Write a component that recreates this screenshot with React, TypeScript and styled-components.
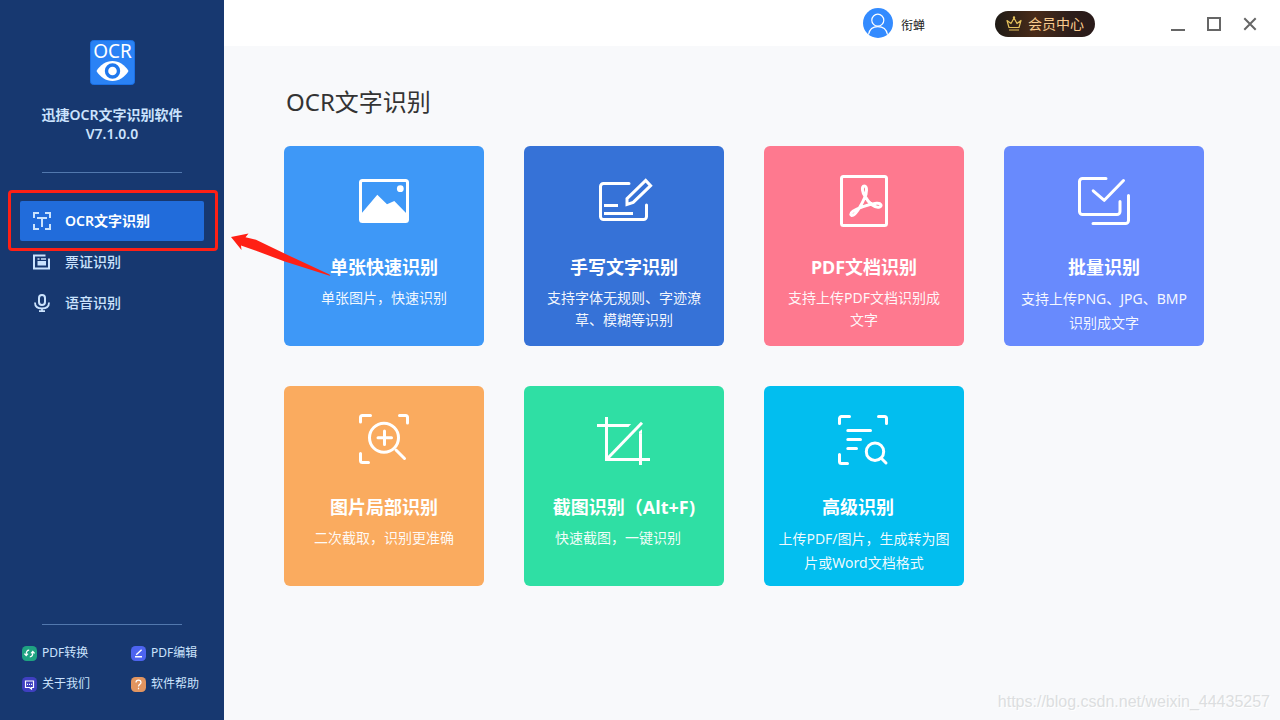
import React from 'react';
import styled, { createGlobalStyle } from 'styled-components';

const GlobalStyle = createGlobalStyle`
  *, *::before, *::after { box-sizing: border-box; }
  body {
    margin: 0;
    background: #f8f9fb;
    font-family: "Noto Sans", "Noto Sans CJK SC", sans-serif;
  }
  button { border: 0; margin: 0; padding: 0; background: none; font: inherit; color: inherit; cursor: pointer; }
  a { color: inherit; text-decoration: none; }
  svg { display: block; flex: none; overflow: visible; }
`;

const Window = styled.div`
  position: relative;
  display: flex;
  min-height: 100vh;
`;

const Sidebar = styled.aside`
  position: relative;
  z-index: 1;
  flex: none;
  display: flex;
  flex-direction: column;
  width: 224px;
  padding: 40px 0 28px;
  background: #173870;
  color: #cbe3fd;
`;

const Brand = styled.div`
  display: flex;
  flex-direction: column;
  align-items: center;
  margin-bottom: 29px;
  text-align: center;
`;

const BrandName = styled.div`
  margin-top: 20px;
  font-size: 14px;
  line-height: 19px;
  font-weight: 600;
`;

const Divider = styled.hr`
  width: 140px;
  height: 1px;
  margin: 0 auto;
  border: 0;
  background: #5278ae;
`;

const Nav = styled.nav`
  display: flex;
  flex-direction: column;
  gap: 1px;
  margin: 28px 20px auto;
`;

const NavItem = styled.a<{ $active?: boolean }>`
  position: relative;
  display: flex;
  align-items: center;
  gap: 14px;
  height: 40px;
  padding: 0 13px;
  border-radius: 2px;
  background: ${(p) => (p.$active ? '#216cdb' : 'transparent')};
  color: ${(p) => (p.$active ? '#ffffff' : '#cbe3fd')};
  font-size: 14px;
  line-height: 20px;
  font-weight: ${(p) => (p.$active ? 600 : 500)};
  svg { color: #cbe3fd; }
`;

const Highlight = styled.span`
  position: absolute;
  inset: -11px -14px -10px -12px;
  border: 3px solid #ff2015;
  border-radius: 4px;
  pointer-events: none;
`;

const Arrow = styled.svg`
  position: absolute;
  left: 211px;
  top: 32px;
  pointer-events: none;
`;

const FooterLinks = styled.div`
  display: grid;
  grid-template-columns: 109px auto;
  row-gap: 15px;
  margin-top: 20px;
  padding-left: 22px;
`;

const FooterLink = styled.a`
  display: flex;
  align-items: center;
  gap: 5px;
  font-size: 12px;
  line-height: 16px;
`;

const Content = styled.div`
  flex: 1;
  min-width: 0;
`;

const Header = styled.header`
  display: flex;
  align-items: center;
  justify-content: flex-end;
  height: 46px;
  padding-right: 23px;
  background: #ffffff;
`;

const User = styled.button`
  display: flex;
  align-items: center;
  gap: 8px;
  margin-right: 70px;
  color: #222222;
`;

const UserName = styled.span`
  padding-top: 5px;
  font-size: 12px;
  line-height: 16px;
`;

const VipButton = styled.button`
  display: flex;
  align-items: center;
  justify-content: center;
  gap: 6px;
  width: 100px;
  height: 26px;
  margin: 2px 76px 0 0;
  border-radius: 13px;
  background: linear-gradient(90deg, #1f1b16 0%, #492b19 40%, #2d1e1a 75%, #2a1b1a 100%);
  color: #f9cb8e;
  font-size: 14px;
  line-height: 20px;
`;

const WindowControls = styled.div`
  display: flex;
  gap: 22px;
  margin-top: 2px;
  color: #666666;
`;

const Main = styled.main`
  padding: 38px 40px 60px 60px;
`;

const Heading = styled.h1`
  margin: 0 0 26px 2px;
  color: #333333;
  font-size: 24px;
  line-height: 36px;
  font-weight: 400;
`;

const CardGrid = styled.div`
  display: grid;
  grid-template-columns: repeat(auto-fill, 200px);
  gap: 40px;
`;

const Card = styled.button<{ $color: string }>`
  display: flex;
  flex-direction: column;
  align-items: center;
  min-height: 200px;
  padding-top: 27px;
  border-radius: 6px;
  background: ${(p) => p.$color};
  color: #ffffff;
`;

const CardTitle = styled.span<{ $trail?: boolean }>`
  margin-top: 26px;
  padding-right: ${(p) => (p.$trail ? 12 : 0)}px;
  font-size: 18px;
  line-height: 24px;
  font-weight: 700;
  white-space: nowrap;
`;

const CardText = styled.span<{ $loose?: boolean; $trail?: boolean }>`
  margin-top: 8px;
  padding-right: ${(p) => (p.$trail ? 12 : 0)}px;
  color: rgba(255, 255, 255, 0.94);
  font-size: 14px;
  line-height: ${(p) => (p.$loose ? 24 : 22)}px;
  white-space: nowrap;
`;

const Line = styled.span`
  display: block;
`;

const Watermark = styled.div`
  position: absolute;
  right: 10px;
  bottom: 8px;
  color: #dcdee0;
  font-family: "Liberation Sans", sans-serif;
  font-size: 16px;
  line-height: 20px;
  text-shadow: 1px 1px 0 #ffffff;
  pointer-events: none;
`;

const Logo = () => (
  <svg width="45" height="45" viewBox="0 0 45 45" role="img" aria-label="OCR">
    <rect x="0.5" y="0.5" width="44" height="44" rx="3" fill="#2a82f5" stroke="#1a70e6" />
    <text x="22.5" y="18" textAnchor="middle" fill="#fff" fontSize="19" fontFamily="Noto Sans, sans-serif">OCR</text>
    <path d="M6.5 31C10 25 16 21 22.5 21S35 25 38.5 31C35 37 29 41 22.5 41S10 37 6.5 31z" fill="#fff" />
    <circle cx="22.5" cy="31" r="6" fill="#fff" stroke="#1f78ee" strokeWidth="3.4" />
  </svg>
);

const CardIcon = ({ children }: { children: React.ReactNode }) => (
  <svg width="56" height="56" viewBox="0 0 56 56" fill="none" stroke="currentColor" strokeWidth="3" strokeLinecap="round" strokeLinejoin="round" aria-hidden="true">
    {children}
  </svg>
);

const NavIcon = ({ children }: { children: React.ReactNode }) => (
  <svg width="18" height="18" viewBox="0 0 18 18" fill="none" stroke="currentColor" strokeWidth="2" aria-hidden="true">
    {children}
  </svg>
);

const FooterIcon = ({ color, children }: { color: string; children: React.ReactNode }) => (
  <svg width="15" height="15" viewBox="0 0 15 15" fill="none" stroke="#fff" strokeWidth="1.2" aria-hidden="true">
    <rect width="15" height="15" rx="4.5" fill={color} stroke="none" />
    {children}
  </svg>
);

const cards = [
  {
    color: '#3e98f7',
    title: '单张快速识别',
    lines: ['单张图片，快速识别'],
    icon: (
      <>
        <rect x="4.5" y="7.5" width="47" height="41" rx="2" />
        <path d="M5 41L21.3 21.7 31 31.3 38.3 28 51 41V48H5z" fill="currentColor" stroke="none" />
        <circle cx="44.3" cy="15.7" r="3.4" fill="currentColor" stroke="none" />
      </>
    ),
  },
  {
    color: '#3672d7',
    title: '手写文字识别',
    lines: ['支持字体无规则、字迹潦', '草、模糊等识别'],
    icon: (
      <>
        <path d="M33 10.5H7.5a3 3 0 0 0-3 3V43.5a3 3 0 0 0 3 3H47.5a3 3 0 0 0 3-3V32" />
        <path d="M8 32.5H22M8 40.5H37" strokeLinecap="butt" />
        <path d="M31 31.5V25.7L49.7 7.4 54.6 12.6 37.2 29.4z" strokeLinejoin="miter" />
      </>
    ),
  },
  {
    color: '#fe798f',
    title: 'PDF文档识别',
    lines: ['支持上传PDF文档识别成', '文字'],
    icon: (
      <>
        <rect x="5.5" y="3.5" width="45" height="49" rx="2" />
        <path
          d="M29.5 24C26.2 20 25.2 13 28.3 13S31 20 28.5 25C26 31 20.5 40.5 17.2 42.2C14.2 43.3 13.8 40.5 17 38.2C21 35.2 32 31.5 40.5 30.3C45.5 29.8 46.2 33 43.5 34C39 35.5 32.5 30 29.5 24z"
          strokeWidth="3"
        />
      </>
    ),
  },
  {
    color: '#688afd',
    title: '批量识别',
    lines: ['支持上传PNG、JPG、BMP', '识别成文字'],
    loose: true,
    icon: (
      <>
        <path d="M30 5.5H6.5a3 3 0 0 0-3 3V38.5a3 3 0 0 0 3 3H41a3 3 0 0 0 3-3V28.5" />
        <path d="M17 50.5H49.5a3 3 0 0 0 3-3V22.5" />
        <path d="M17.2 17.8L28.3 27.3 47.5 7.5" />
      </>
    ),
  },
  {
    color: '#faab5f',
    title: '图片局部识别',
    lines: ['二次截取，识别更准确'],
    icon: (
      <>
        <path d="M4.5 9V4.5a2 2 0 0 1 2-2H14.5M43.5 2.5H49.5a2 2 0 0 1 2 2V10M4.5 40.5V47.5a2 2 0 0 0 2 2H12.5" />
        <circle cx="28" cy="24.7" r="14.5" />
        <path d="M28.5 18V31.5M22 24.7H35.5M40 37L48.5 45.5" />
      </>
    ),
  },
  {
    color: '#2fdfa4',
    title: '截图识别（Alt+F)',
    lines: ['快速截图，一键识别'],
    trailText: true,
    icon: (
      <>
        <g strokeLinecap="butt" strokeLinejoin="miter">
          <path d="M10.500 4V46.500H54" />
          <path d="M1 12.500H32.500" />
          <path d="M44.500 20.500V52" />
        </g>
        <path d="M32 11h3.200l-3 3H32zM43 20.800v-2l3-2.500v4.500z" fill="currentColor" stroke="none" />
        <path d="M11 46L46 9.700" strokeLinecap="butt" />
      </>
    ),
  },
  {
    color: '#02beef',
    title: '高级识别',
    lines: ['上传PDF/图片，生成转为图', '片或Word文档格式'],
    loose: true,
    trailTitle: true,
    icon: (
      <>
        <path d="M3.5 10.5V5.5a2 2 0 0 1 2-2H13.5M42.5 3.5H48.5a2 2 0 0 1 2 2V10.5M3.5 41.5V48.5a2 2 0 0 0 2 2H11.5" />
        <path d="M11.8 17.5H34.5M11.8 26.5H24.5M11.8 35.5H20.5" />
        <circle cx="39" cy="38.7" r="8.7" />
        <path d="M45.5 45.5L50 50" />
      </>
    ),
  },
];

export default function App() {
  return (
    <>
      <GlobalStyle />
      <Window>
        <Sidebar>
          <Brand>
            <Logo />
            <BrandName>
              <Line>迅捷OCR文字识别软件</Line>
              <Line>V7.1.0.0</Line>
            </BrandName>
          </Brand>
          <Divider />
          <Nav>
            <NavItem href="#ocr" $active aria-current="page">
              <NavIcon>
                <path d="M1 6V1H6M12 1H17V6M17 12V17H12M6 17H1V12" />
                <path d="M4 6H14M9 6V15" />
              </NavIcon>
              OCR文字识别
              <Highlight />
              <Arrow width="100" height="44" viewBox="0 0 100 44" aria-hidden="true">
                <path d="M0 4L17.5 0.5 14.5 4.2 25 6.8 53 20.3 98.5 41.6 99.5 43 53 28.2 27 18.5 10 12.500 10.500 17z" fill="#ff2015" />
              </Arrow>
            </NavItem>
            <NavItem href="#tickets">
              <NavIcon>
                <path d="M12.5 2.5H1V15.5H16V5.5" />
                <path d="M4.5 6H6.5M8 6H13" strokeWidth="1.5" />
                <path d="M4.5 8h8.5v4.5h-8.5z" fill="currentColor" stroke="none" />
              </NavIcon>
              票证识别
            </NavItem>
            <NavItem href="#voice">
              <NavIcon>
                <rect x="6" y="1" width="6" height="10" rx="3" />
                <path d="M2 8.5C2 12.5 5 14.5 9 14.5S16 12.5 16 8.500M9 14.5V17M6 17.2H12" strokeWidth="1.8" />
              </NavIcon>
              语音识别
            </NavItem>
          </Nav>
          <Divider />
          <FooterLinks>
            <FooterLink href="#convert">
              <FooterIcon color="#1fa382">
                <path d="M7.2 4.2C5 4.2 4.2 5.5 4.2 8.500M2.4 7.6L4.2 9.6 6 7.6M7.8 10.8C10 10.8 10.8 9.5 10.8 6.500M9 7.4L10.8 5.4 12.6 7.4" />
              </FooterIcon>
              PDF转换
            </FooterLink>
            <FooterLink href="#edit">
              <FooterIcon color="#4d64f0">
                <path d="M5.2 8.8L10.6 3.8M4 10.7H11" strokeWidth="1.4" />
              </FooterIcon>
              PDF编辑
            </FooterLink>
            <FooterLink href="#about">
              <FooterIcon color="#3f3fc0">
                <path d="M3.5 4H11.5V10.5H9.5V12L7.5 10.5H3.5z" />
                <path d="M5 7.3H6M7 7.3H8M9 7.3H10" />
              </FooterIcon>
              关于我们
            </FooterLink>
            <FooterLink href="#help">
              <FooterIcon color="#e29560">
                <path d="M5 5.5C5 2.3 10 2.3 10 5.5C10 7.3 7.5 7.3 7.5 9.5M7.5 10.8V12.2" />
              </FooterIcon>
              软件帮助
            </FooterLink>
          </FooterLinks>
        </Sidebar>
        <Content>
          <Header>
            <User>
              <svg width="30" height="30" viewBox="0 0 30 30" fill="none" stroke="#fff" strokeWidth="1.2" aria-hidden="true">
                <circle cx="15" cy="15" r="15" fill="#338bff" stroke="none" />
                <circle cx="14.8" cy="12.2" r="6" />
                <path d="M5.5 26.5C6.5 21.5 10 18.7 14.8 18.7S23.5 21.5 24.5 26.5" />
              </svg>
              <UserName>衔蝉</UserName>
            </User>
            <VipButton>
              <svg width="16" height="16" viewBox="0 0 16 16" fill="none" stroke="#e5c25c" strokeWidth="1.2" strokeLinejoin="round" aria-hidden="true">
                <path d="M3 11.5L1 4.5 5 7.5 8 2 11 7.5 15 4.5 13 11.5zM3 14H13" />
                <circle cx="8" cy="1.5" r="0.6" />
              </svg>
              会员中心
            </VipButton>
            <WindowControls>
              <button aria-label="最小化">
                <svg width="14" height="14" viewBox="0 0 14 14" stroke="currentColor" strokeWidth="2"><path d="M0 13H14" /></svg>
              </button>
              <button aria-label="最大化">
                <svg width="14" height="14" viewBox="0 0 14 14" fill="none" stroke="currentColor" strokeWidth="2"><rect x="1" y="1" width="12" height="12" /></svg>
              </button>
              <button aria-label="关闭">
                <svg width="14" height="14" viewBox="0 0 14 14" stroke="currentColor" strokeWidth="2"><path d="M1.300 1.300L12.700 12.700M12.700 1.300L1.300 12.700" /></svg>
              </button>
            </WindowControls>
          </Header>
          <Main>
            <Heading>OCR文字识别</Heading>
            <CardGrid>
              {cards.map((card) => (
                <Card key={card.title} $color={card.color}>
                  <CardIcon>{card.icon}</CardIcon>
                  <CardTitle $trail={card.trailTitle}>{card.title}</CardTitle>
                  <CardText $loose={card.loose} $trail={card.trailText}>
                    {card.lines.map((line) => (
                      <Line key={line}>{line}</Line>
                    ))}
                  </CardText>
                </Card>
              ))}
            </CardGrid>
          </Main>
        </Content>
        <Watermark>https://blog.csdn.net/weixin_44435257</Watermark>
      </Window>
    </>
  );
}
